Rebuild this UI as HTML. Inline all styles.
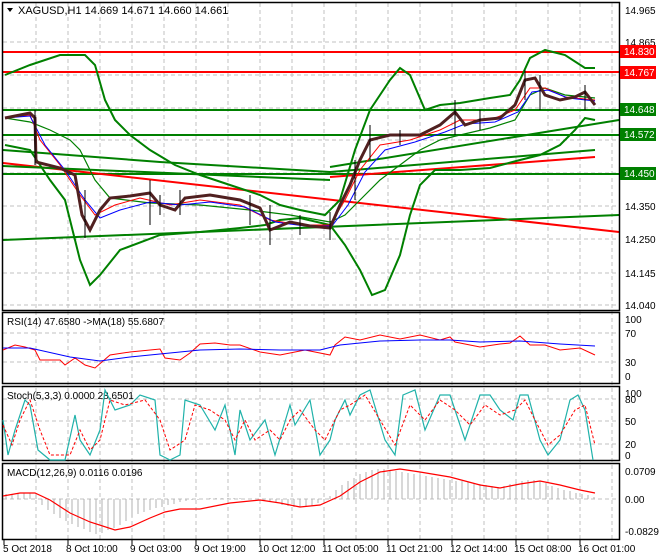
<!DOCTYPE html>
<html><head><meta charset="utf-8"><style>
html,body{margin:0;padding:0;background:#fff;}
svg{display:block;font-family:"Liberation Sans",sans-serif;font-size:10px;}
</style></head><body>
<svg width="660" height="560" viewBox="0 0 660 560" xmlns="http://www.w3.org/2000/svg">
<rect width="660" height="560" fill="#fff"/>
<g stroke="#c0c0c0" stroke-dasharray="4,3" stroke-width="1" fill="none">
<path d="M36 3V540M68 3V540M100 3V540M132 3V540M164 3V540M196 3V540M228 3V540M260 3V540M292 3V540M324 3V540M356 3V540M388 3V540M420 3V540M452 3V540M484 3V540M516 3V540M548 3V540M580 3V540M612 3V540"/>
<path d="M3 42H619M3 75H619M3 108H619M3 140H619M3 173H619M3 206H619M3 239H619M3 273H619M3 305H619"/>
<path d="M3 333H619M3 362H619M3 399H619M3 421H619M3 444H619M3 499H619"/>
</g>
<g stroke-width="2" fill="none">
<path d="M3 52H619M3 72H619" stroke="#ff0000"/>
<path d="M3 110H619M3 135H619M3 174H619" stroke="#008000"/>
<path d="M3 163L619 232M330 177L595 157" stroke="#ff0000"/>
<path d="M3 240L619 215M330 167L619 120M3 150L160 162L330 172L595 150M3 166L330 180" stroke="#008000"/>
</g>
<g fill="none" stroke="#008000" stroke-width="2">
<polyline points="5,75 30,65 60,55 85,55 95,65 105,100 115,120 130,135 150,150 175,165 200,175 230,185 260,195 280,205 300,210 325,215 340,200 355,150 370,110 390,80 400,68 410,75 425,110 440,105 460,103 490,98 510,95 520,80 530,58 545,50 565,55 585,68 595,68"/>
<polyline points="5,145 30,150 50,180 65,200 80,260 90,285 100,275 120,250 160,235 200,232 240,228 265,225 280,220 300,218 330,225 345,245 360,270 372,295 385,290 400,255 410,215 420,185 435,170 460,170 490,168 520,160 540,155 560,145 575,130 585,118 595,120"/>
<polyline stroke-width="1.2" points="5,118 30,122 50,130 70,140 80,150 95,180 110,198 150,203 200,205 250,210 290,215 330,222 345,215 360,200 380,180 400,165 420,150 440,140 460,135 490,128 515,120 530,95 545,88 565,95 595,98"/>
</g>
<polyline fill="none" stroke="#ff0000" stroke-width="1" points="5,118 30,115 40,140 60,165 80,195 95,215 115,205 140,198 170,205 200,200 240,205 270,220 300,225 330,225 345,200 360,170 380,145 410,140 440,130 460,120 490,120 515,110 530,88 545,88 565,97 595,100"/>
<polyline fill="none" stroke="#0000ff" stroke-width="1" points="5,118 30,116 45,145 65,170 85,200 100,218 120,210 150,202 180,205 210,202 245,207 275,222 305,226 332,226 348,205 365,172 385,150 415,142 445,132 465,124 495,122 518,112 532,92 548,90 568,98 595,101"/>
<polyline fill="none" stroke="#502020" stroke-width="3" points="5,118 30,113 35,118 36,162 60,168 75,175 82,215 90,230 100,210 110,198 130,196 150,193 160,205 175,210 185,198 210,195 240,200 260,208 270,230 290,222 310,226 330,228 340,205 350,185 360,160 370,140 390,135 420,135 440,125 455,112 465,125 480,120 500,118 515,105 525,80 535,78 545,95 560,100 575,97 585,92 595,105"/>
<g stroke="#000" stroke-width="1"><path d="M35 110V165M85 190V238M150 180V225M160 195V215M180 190V215M270 205V245M330 212V240M355 160V200M370 125V160M455 100V135M525 70V100M540 75V110M585 85V110M250 195V225M300 215V235M400 130V145M480 110V130"/></g>
<g fill="none" stroke="#000" stroke-width="1.5">
<rect x="2.5" y="2.5" width="617" height="308"/>
<rect x="2.5" y="312.5" width="617" height="71"/>
<rect x="2.5" y="386.5" width="617" height="74"/>
<rect x="2.5" y="463.5" width="617" height="76"/>
</g>
<path d="M7 8L13 8L10 12Z" fill="#000"/>
<text x="18" y="14" font-size="11">XAGUSD,H1  14.669 14.671 14.660 14.661</text>
<g font-size="10" fill="#000">
<text x="625" y="14">14.965</text><text x="625" y="46">14.865</text>
<text x="625" y="210">14.350</text><text x="625" y="243">14.250</text><text x="625" y="277">14.145</text><text x="625" y="309">14.040</text>
</g>
<g font-size="10" fill="#fff">
<rect x="620" y="45" width="36" height="13" fill="#ff0000"/><text x="624" y="55">14.830</text>
<rect x="620" y="66" width="36" height="13" fill="#ff0000"/><text x="624" y="76">14.767</text>
<rect x="620" y="103" width="36" height="13" fill="#008000"/><text x="624" y="113">14.648</text>
<rect x="620" y="128" width="36" height="13" fill="#008000"/><text x="624" y="138">14.572</text>
<rect x="620" y="167" width="36" height="13" fill="#008000"/><text x="624" y="177">14.450</text>
</g>
<text x="7" y="325">RSI(14) 47.6580  -&gt;MA(18) 55.6807</text>
<polyline fill="none" stroke="#ff0000" points="3,350 15,345 25,347 35,350 40,360 60,360 65,365 75,358 85,365 95,368 110,355 130,352 160,349 165,358 180,360 190,353 200,344 215,343 230,345 240,345 260,352 280,355 305,350 330,355 335,345 345,337 360,340 380,335 400,339 420,335 440,340 450,337 455,342 470,345 480,347 500,344 510,343 520,336 530,345 545,345 560,350 580,348 595,355"/>
<polyline fill="none" stroke="#0000ff" points="3,348 30,348 70,357 100,361 130,357 160,354 200,350 240,349 280,350 320,350 340,345 380,341 420,340 450,340 480,342 520,341 560,344 595,346"/>
<g font-size="10"><text x="625" y="323">100</text><text x="625" y="337">70</text><text x="625" y="366">30</text><text x="625" y="380">0</text></g>
<text x="7" y="399">Stoch(5,3,3) 0.0000 28.6501</text>
<polyline fill="none" stroke="#20b2aa" stroke-width="1.2" points="3,420 8,455 15,430 25,400 30,405 38,450 50,460 65,460 75,415 80,440 90,455 100,430 105,390 115,410 130,405 140,395 155,400 160,455 170,460 180,455 185,400 200,405 215,430 225,405 235,455 240,410 250,440 265,420 275,455 290,405 295,425 310,400 320,455 330,440 335,420 345,400 350,415 360,395 370,390 385,440 395,455 403,395 415,390 425,430 440,395 450,395 465,440 480,395 490,395 500,410 513,420 520,395 528,395 540,440 548,455 560,440 570,400 578,395 585,410 593,460"/>
<polyline fill="none" stroke="#ff0000" stroke-dasharray="3,2" points="3,425 12,445 20,420 30,400 40,430 50,455 70,455 80,430 90,450 100,440 110,400 125,405 145,400 160,420 170,450 185,440 195,405 210,410 225,420 235,440 245,420 255,440 270,430 280,440 290,420 300,410 315,430 325,440 340,410 350,405 365,395 380,420 395,445 410,405 425,420 440,400 455,410 470,425 485,405 500,415 515,410 525,400 535,420 548,445 560,435 575,410 585,405 595,445"/>
<g font-size="10"><text x="625" y="397">100</text><text x="625" y="403">80</text><text x="625" y="425">50</text><text x="625" y="448">20</text><text x="625" y="459">0</text></g>
<text x="7" y="476">MACD(12,26,9) 0.0116 0.0196</text>
<g stroke="#b0b0b0" stroke-width="1">
<path d="M6 499V494M12 499V494M18 499V493M24 499V493M30 499V493M36 499V495M42 499V505M48 499V510M54 499V514M60 499V518M66 499V521M72 499V524M78 499V527M84 499V529M90 499V532M96 499V534M102 499V533M108 499V530M114 499V528M120 499V525M126 499V521M132 499V517M138 499V514M144 499V512M150 499V510M156 499V508M162 499V507M168 499V505M174 499V504M180 499V502M186 499V501M192 499V500M198 499V500M204 499V499M210 499V498M216 499V498M222 499V498M228 499V498M234 499V498M240 499V498M246 499V499M252 499V499M258 499V499M264 499V500M270 499V501M276 499V503M282 499V505M288 499V506M294 499V507M300 499V507M306 499V507M312 499V506M318 499V503M324 499V500M330 499V496M336 499V490M342 499V485M348 499V481M354 499V478M360 499V474M366 499V472M372 499V470M378 499V469M384 499V469M390 499V470M396 499V471M402 499V472M408 499V473M414 499V474M420 499V475M426 499V476M432 499V477M438 499V478M444 499V479M450 499V480M456 499V481M462 499V481M468 499V482M474 499V483M480 499V484M486 499V485M492 499V486M498 499V487M504 499V486M510 499V484M516 499V482M522 499V481M528 499V480M534 499V480M540 499V481M546 499V483M552 499V486M558 499V488M564 499V490M570 499V491M576 499V493M582 499V494M588 499V495M594 499V497"/>
</g>
<polyline fill="none" stroke="#ff0000" stroke-width="1.2" points="3,496 20,493 35,493 50,500 70,513 90,522 115,530 130,527 150,518 165,512 180,509 200,509 230,503 260,500 280,503 300,507 320,505 340,496 360,482 380,472 400,469 420,472 450,477 480,485 500,488 520,484 540,481 560,485 580,490 595,493"/>
<g font-size="10"><text x="625" y="475">0.0709</text><text x="625" y="503">0.00</text><text x="625" y="535">-0.0829</text></g>
<g stroke="#000"><path d="M4 540V545M68 540V545M132 540V545M196 540V545M260 540V545M324 540V545M388 540V545M452 540V545M516 540V545M580 540V545"/></g>
<g font-size="10">
<text x="3" y="552">5 Oct 2018</text><text x="66" y="552">8 Oct 10:00</text><text x="130" y="552">9 Oct 03:00</text><text x="194" y="552">9 Oct 19:00</text><text x="258" y="552">10 Oct 12:00</text><text x="322" y="552">11 Oct 05:00</text><text x="386" y="552">11 Oct 21:00</text><text x="450" y="552">12 Oct 14:00</text><text x="514" y="552">15 Oct 08:00</text><text x="578" y="552">16 Oct 01:00</text>
</g>
</svg>
</body></html>
